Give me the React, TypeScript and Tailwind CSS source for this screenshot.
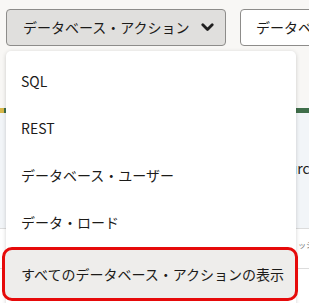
import React from "react";

const font = { fontFamily: '"Noto Sans CJK JP", "Noto Sans", sans-serif' };

function Chevron() {
  return (
    <svg width="13" height="9" viewBox="0 0 13 9" className="ml-[11px]">
      <path d="M1.8 1.8 L6.5 6.5 L11.2 1.8" fill="none" stroke="#1f1f1f" strokeWidth="2.8" strokeLinecap="round" strokeLinejoin="round" />
    </svg>
  );
}

export default function App() {
  const items = ["SQL", "REST", "データベース・ユーザー", "データ・ロード"];
  return (
    <div className="relative w-[309px] h-[303px] overflow-hidden bg-[#f8f7f5] text-[#1c1b19]" style={font}>
      {/* header buttons */}
      <div className="flex gap-[14px] pl-[6px] pt-[9px]">
        <div className="flex items-center h-[37px] w-[220px] shrink-0 pl-[16px] rounded-[4px] border border-[#8d8c8a] bg-[#e0dfdd] text-[14px]">
          <span>データベース・アクション</span>
          <Chevron />
        </div>
        <div className="flex items-center h-[37px] w-[120px] shrink-0 pl-[15px] rounded-[4px] border border-[#8d8c8a] bg-white text-[14px] whitespace-nowrap">
          データベース
        </div>
      </div>

      {/* background page content */}
      <div className="mt-[62px] flex flex-col">
        <div className="h-[5px] flex">
          <div className="w-[4px] bg-[#d8b84a]" />
          <div className="flex-1 bg-[#3f6e4a]" />
        </div>
        <div className="h-[116px] bg-[#f2f5f8] border-b border-[#dcdcdc] relative">
          <div className="pt-[45px] pl-[272px] text-[14px] whitespace-nowrap">Source</div>
        </div>
        <div className="h-[40px] bg-white border-b border-[#dcdcdc]">
          <div className="pt-[10px] pl-[298px] text-[8px] text-[#777] whitespace-nowrap">ッシ</div>
        </div>
        <div className="h-[40px] bg-white" />
      </div>

      {/* dropdown menu overlay */}
      <div className="absolute left-[6px] top-[51px] w-[290px] h-[260px] bg-white rounded-[5px] shadow-[0_1px_4px_rgba(0,0,0,0.18)] pt-[7px]">
        {items.map((t) => (
          <div key={t} className="h-[47px] flex items-center pl-[15px] text-[14px]">
            {t}
          </div>
        ))}
      </div>
      <div className="absolute left-[2px] top-[247px] w-[296px] h-[54px] rounded-[10px] border-[3px] border-[#e60a0a] bg-[#eeedeb] flex items-center pl-[16px] text-[14px]">
        すべてのデータベース・アクションの表示
      </div>
    </div>
  );
}
